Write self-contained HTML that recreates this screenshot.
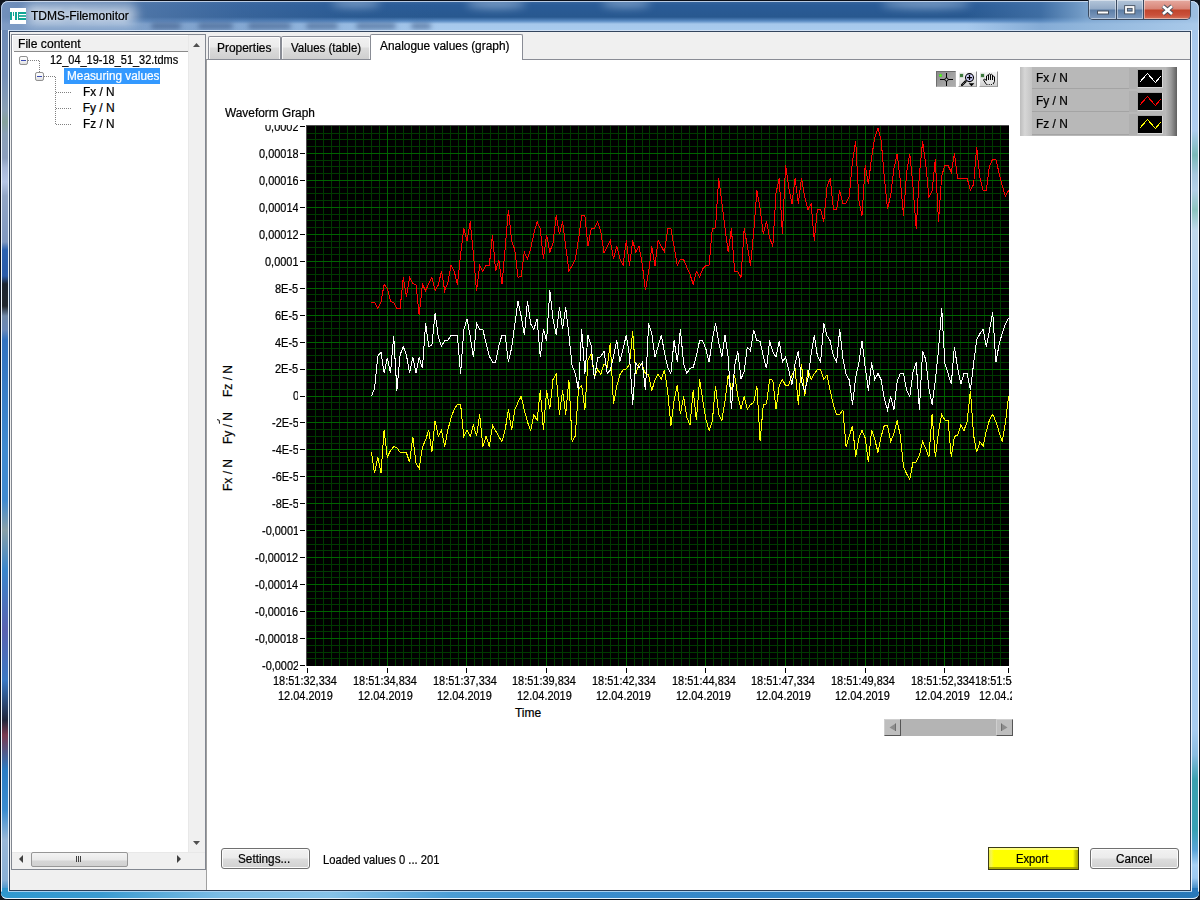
<!DOCTYPE html>
<html lang="en"><head><meta charset="utf-8"><title>TDMS-Filemonitor</title>
<style>
html,body{margin:0;padding:0}
body{width:1200px;height:900px;position:relative;overflow:hidden;background:#10141c;font-family:"Liberation Sans",sans-serif;font-size:12px;color:#000;line-height:14px;-webkit-text-stroke:0.22px #000}
div,span{position:absolute;box-sizing:border-box;white-space:nowrap}
svg{position:absolute;overflow:visible}
#frame{left:0;top:0;width:1200px;height:900px;border-radius:8px 8px 7px 7px;border:1px solid #0a0e18;
 background:#9cbfe4}
#ftop{left:1px;top:1px;width:1198px;height:29px;border-radius:7px 7px 0 0;box-shadow:inset 0 1px 0 rgba(225,235,248,.75),inset 1px 0 0 rgba(225,235,248,.6),inset -1px 0 0 rgba(225,235,248,.6);
 background:linear-gradient(to right,rgba(122,150,192,.9) 0,rgba(112,144,186,.8) 40px,rgba(100,134,180,.62) 140px,rgba(80,118,170,.4) 240px,rgba(60,105,160,.16) 340px,rgba(40,90,150,0) 440px,rgba(40,90,150,0) 965px,rgba(90,135,185,.45) 1040px,rgba(140,178,216,.8) 1086px,rgba(170,202,234,.9) 1198px),
 linear-gradient(to bottom,#3a679f 0,#2a5b97 4px,#28588f 16px,#5b8cc4 20px,#a6c8ec 23px,#a9cbee 29px)}
#tblobs{left:1px;top:1px;width:1198px;height:29px;overflow:hidden;border-radius:7px 7px 0 0}
#tblobs div{background:rgba(205,225,248,.55);border-radius:50%;filter:blur(4px)}
#tblobs div.sm{background:rgba(45,75,120,.55);border-radius:3px;filter:blur(2.5px)}
#tglow{left:24px;top:3px;width:114px;height:23px;border-radius:11px;background:rgba(235,242,250,.5);filter:blur(5px)}
#fleft{left:1px;top:30px;width:8px;height:861px;border-left:1px solid #eef6ff;border-right:1px solid #e8f2fc;
 background:linear-gradient(to bottom,#6d8bb6 0,#7590b8 45px,#8aa0b6 80px,#86a29c 92px,#8aa0b8 104px,#8c9fbe 128px,#a8b8d8 138px,#b6c6e6 152px,#92a6c6 166px,#8098c0 212px,#2c62b0 220px,#2a5aa8 246px,#1c2430 254px,#20262e 276px,#7088a8 286px,#6a88b8 300px,#3272c0 310px,#3f8ad0 420px,#3f8ad0 470px,#8aa0a8 500px,#3a86cc 540px,#5a62b0 600px,#3a78c4 650px,#20263c 690px,#7a3a50 705px,#2a7cc4 740px,#3a8cd0 780px,#9ab8d8 810px,#8ab0d6 850px,#3a90cc 861px)}
#fright{left:1191px;top:30px;width:8px;height:861px;border-left:1px solid #eaf4ff;border-right:1px solid #f2f8ff;
 background:linear-gradient(to bottom,#a8c8ec 0,#b0cef0 100px,#7ab8b8 125px,#a8c8e0 145px,#b4d0e8 160px,#8cc4c0 180px,#c0d8ec 200px,#b4d2f2 260px,#a8ccf0 700px,#8abce0 725px,#3aa0b0 750px,#38a0b4 800px,#5aa4d8 820px,#a8d0f4 835px,#9cc8f0 848px,#2c7cbc 861px)}
#fbot{left:1px;top:891px;width:1198px;height:8px;border-radius:0 0 6px 6px;border-top:1px solid #a8d0f0;border-bottom:1px solid #e6f2fc;
 background:linear-gradient(to right,#2f98cf 0,#3a9ad0 100px,#7cbce4 220px,#86c2e8 330px,#4a9cd4 450px,#3a8ccc 600px,#2e80c2 900px,#2878b8 1198px)}
#client{left:9px;top:31px;width:1182px;height:860px;border:1px solid #2b3e58;border-top-color:#33455e;background:#f0f0f0;box-shadow:0 -1px 0 rgba(220,232,248,.8)}
</style></head>
<body>
<div id="frame"></div><div id="ftop"></div><div id="fleft"></div><div id="fright"></div><div id="fbot"></div>
<div id="tblobs"><div style="left:330px;top:-1px;width:50px;height:7px"></div><div style="left:465px;top:-1px;width:60px;height:8px"></div><div style="left:600px;top:-1px;width:50px;height:7px"></div><div style="left:880px;top:-1px;width:90px;height:8px"></div><div class="sm" style="left:150px;top:22px;width:30px;height:6px"></div><div class="sm" style="left:197px;top:22px;width:35px;height:6px"></div><div class="sm" style="left:247px;top:22px;width:43px;height:6px"></div><div class="sm" style="left:305px;top:22px;width:32px;height:6px"></div><div class="sm" style="left:355px;top:22px;width:40px;height:6px"></div><div class="sm" style="left:410px;top:22px;width:20px;height:6px"></div></div>
<div style="left:1192px;top:888px;width:6px;height:5px;background:#2a79bb"></div><div style="left:2px;top:888px;width:6px;height:5px;background:#3096ce"></div>
<div id="client"></div><div id="tglow"></div>
<svg style="left:10px;top:8px" width="16" height="16" viewBox="0 0 16 16" shape-rendering="crispEdges">
<rect width="16" height="16" fill="#fff"/>
<g fill="#10a595"><rect x="0" y="4" width="2" height="8"/><rect x="3" y="4" width="1" height="4"/><rect x="5" y="4" width="2" height="8"/>
<rect x="8" y="4" width="1" height="8"/><rect x="8" y="4" width="8" height="1.6"/><rect x="8" y="10.3" width="8" height="1.7"/></g>
<rect x="9" y="7.3" width="7" height="1.3" fill="#38b4a6"/>
</svg>
<div style="left:31.30px;top:9.00px;transform:scaleX(1.0041);transform-origin:0 0;text-shadow:0 0 6px rgba(255,255,255,.9),0 0 10px rgba(255,255,255,.7)">TDMS-Filemonitor</div>
<div style="left:1088px;top:0;width:103px;height:20px;border:1px solid #3a4a60;border-top:none;border-radius:0 0 5px 5px;overflow:hidden;
    background:#6f8fb4">
    <div style="left:0;top:0;width:28px;height:19px;border-right:1px solid #3a4a60;background:linear-gradient(to bottom,#b4c6da 0,#93aac6 9px,#5d7ea6 10px,#7f9cc0 19px);box-shadow:inset 0 0 0 1px rgba(255,255,255,.45)"></div>
    <div style="left:28px;top:0;width:27px;height:19px;border-right:1px solid #3a4a60;background:linear-gradient(to bottom,#b4c6da 0,#93aac6 9px,#5d7ea6 10px,#7f9cc0 19px);box-shadow:inset 0 0 0 1px rgba(255,255,255,.45)"></div>
    <div style="left:55px;top:0;width:47px;height:19px;background:linear-gradient(to bottom,#e6aaa0 0,#d88476 9px,#c1452c 10px,#c9503a 15px,#d4745c 19px);box-shadow:inset 0 0 0 1px rgba(255,255,255,.45)"></div>
    </div>
<svg style="left:1088px;top:0" width="103" height="20" viewBox="0 0 103 20">
    <rect x="9.5" y="11" width="11" height="3" fill="#fff" stroke="#46505e" stroke-width="1"/>
    <rect x="38" y="7" width="7.5" height="5.5" fill="none" stroke="#46505e" stroke-width="3.6"/>
    <rect x="38" y="7" width="7.5" height="5.5" fill="none" stroke="#fff" stroke-width="1.8"/>
    <path d="M75 6.2 L84 14 M84 6.2 L75 14" stroke="#46505e" stroke-width="4.4" stroke-linecap="butt"/>
    <path d="M75 6.2 L84 14 M84 6.2 L75 14" stroke="#fff" stroke-width="2.5" stroke-linecap="butt"/>
    </svg>
<div id="tree" style="left:11px;top:34px;width:195px;height:836px;border:1px solid #828790;background:#fff"></div>
<div style="left:13px;top:36px;width:175px;height:15px;background:#f0f0f0"></div><div style="left:14px;top:51px;width:174px;height:1px;background:#8a8a8a"></div>
<div style="left:17.79px;top:36.80px;transform:scaleX(1.0082);transform-origin:0 0;">File content</div>
<div style="left:188px;top:35px;width:17px;height:817px;background:#f0f0f0;border-left:1px solid #e8e8e8"></div>
<svg style="left:188px;top:33px" width="17" height="819"><path d="M5 14 L8.5 10 L12 14 Z" fill="#505050"/><path d="M5 808 L12 808 L8.5 812 Z" fill="#505050"/></svg>
<div style="left:12px;top:852px;width:193px;height:17px;background:#f0f0f0;border-top:1px solid #e8e8e8"></div>
<div style="left:31px;top:852px;width:97px;height:15px;border:1px solid #979797;border-radius:2px;background:linear-gradient(to bottom,#f4f4f4 0,#e9e9e9 7px,#d6d6d6 8px,#cfcfcf 15px)"></div>
<svg style="left:12px;top:851px" width="193" height="17"><path d="M11 4 L7 8 L11 12 Z" fill="#404040"/><path d="M165 4 L169 8 L165 12 Z" fill="#404040"/><path d="M64.5 5 V11 M66.5 5 V11 M68.5 5 V11" stroke="#404040" stroke-width="1"/></svg>
<div style="left:64px;top:68px;width:96px;height:16px;background:#3399ff"></div>
<div style="left:49.99px;top:52.60px;transform:scaleX(0.9144);transform-origin:0 0;">12_04_19-18_51_32.tdms</div>
<div style="left:66.62px;top:68.50px;transform:scaleX(0.9828);transform-origin:0 0;color:#fff;-webkit-text-stroke-color:#fff;">Measuring values</div>
<div style="left:82.71px;top:84.50px;transform:scaleX(0.9867);transform-origin:0 0;">Fx / N</div>
<div style="left:82.70px;top:100.50px;">Fy / N</div>
<div style="left:82.71px;top:116.50px;transform:scaleX(0.9867);transform-origin:0 0;">Fz / N</div>
<svg style="left:12px;top:52px" width="120" height="80" shape-rendering="crispEdges">
    <g stroke="#808080" stroke-width="1" stroke-dasharray="1 1" fill="none">
    <path d="M16 8.5 H28"/><path d="M27.5 9 V20"/><path d="M32 24.5 H44"/><path d="M43.5 25 V72"/>
    <path d="M44 40.5 H59"/><path d="M44 56.5 H59"/><path d="M44 72.5 H59"/>
    </g>
    <defs><linearGradient id="bx" x1="0" y1="0" x2="0" y2="1"><stop offset="0" stop-color="#fff"/><stop offset=".5" stop-color="#f4f4f4"/><stop offset="1" stop-color="#dcdcdc"/></linearGradient></defs>
    <g fill="url(#bx)" stroke="#8e8e8e" stroke-width="1" shape-rendering="auto"><rect x="7.5" y="4.5" width="8" height="8" rx="1.6"/><rect x="23.5" y="20.5" width="8" height="8" rx="1.6"/></g>
    <path d="M9 8.5 H14 M25 24.5 H30" stroke="#3a4ab0" stroke-width="1"/>
    </svg>
<div id="pane" style="left:206px;top:59px;width:984px;height:831px;background:#fff;border-left:1px solid #a0a0a0;border-top:1px solid #898c95"></div>
<div style="left:208px;top:36px;width:73px;height:23px;border:1px solid #898c95;border-bottom:none;border-radius:2px 2px 0 0;background:linear-gradient(to bottom,#f2f2f2 0,#ebebeb 10px,#dddddd 11px,#cfcfcf 22px);box-shadow:inset 1px 1px 0 rgba(255,255,255,.75),inset -1px 0 0 rgba(255,255,255,.75)"></div>
<div style="left:281px;top:36px;width:90px;height:23px;border:1px solid #898c95;border-bottom:none;border-radius:2px 2px 0 0;background:linear-gradient(to bottom,#f2f2f2 0,#ebebeb 10px,#dddddd 11px,#cfcfcf 22px);box-shadow:inset 1px 1px 0 rgba(255,255,255,.75),inset -1px 0 0 rgba(255,255,255,.75)"></div>
<div style="left:370px;top:34px;width:153px;height:26px;border:1px solid #898c95;border-bottom:none;border-radius:2px 2px 0 0;background:#fff"></div>
<div style="left:217.31px;top:40.70px;transform:scaleX(0.9943);transform-origin:0 0;">Properties</div>
<div style="left:291.30px;top:40.70px;transform:scaleX(0.9589);transform-origin:0 0;">Values (table)</div>
<div style="left:380.30px;top:38.70px;transform:scaleX(0.9900);transform-origin:0 0;">Analogue values (graph)</div>
<div style="left:225.30px;top:105.70px;transform:scaleX(0.9889);transform-origin:0 0;">Waveform Graph</div>
<svg id="plot" style="left:0;top:0" width="1200" height="900" viewBox="0 0 1200 900">
<rect x="306" y="125" width="703" height="541" fill="#4d4d4d"/>
<rect x="307" y="126" width="702" height="540" fill="#000"/>
<defs><clipPath id="pc"><rect x="307" y="126" width="702" height="540"/></clipPath></defs>
<path d="M315.5 126V666M323.5 126V666M331.5 126V666M339.5 126V666M347.5 126V666M355.5 126V666M363.5 126V666M371.5 126V666M379.5 126V666M395.5 126V666M403.5 126V666M411.5 126V666M419.5 126V666M426.5 126V666M434.5 126V666M442.5 126V666M450.5 126V666M458.5 126V666M474.5 126V666M482.5 126V666M490.5 126V666M498.5 126V666M506.5 126V666M514.5 126V666M522.5 126V666M530.5 126V666M538.5 126V666M554.5 126V666M562.5 126V666M570.5 126V666M578.5 126V666M586.5 126V666M594.5 126V666M602.5 126V666M610.5 126V666M618.5 126V666M634.5 126V666M642.5 126V666M649.5 126V666M657.5 126V666M665.5 126V666M673.5 126V666M681.5 126V666M689.5 126V666M697.5 126V666M713.5 126V666M721.5 126V666M729.5 126V666M737.5 126V666M745.5 126V666M753.5 126V666M761.5 126V666M769.5 126V666M777.5 126V666M793.5 126V666M801.5 126V666M809.5 126V666M817.5 126V666M825.5 126V666M833.5 126V666M841.5 126V666M849.5 126V666M857.5 126V666M873.5 126V666M880.5 126V666M888.5 126V666M896.5 126V666M904.5 126V666M912.5 126V666M920.5 126V666M928.5 126V666M936.5 126V666M952.5 126V666M960.5 126V666M968.5 126V666M976.5 126V666M984.5 126V666M992.5 126V666M1000.5 126V666M307 133.5H1009M307 139.5H1009M307 146.5H1009M307 160.5H1009M307 166.5H1009M307 173.5H1009M307 187.5H1009M307 193.5H1009M307 200.5H1009M307 214.5H1009M307 220.5H1009M307 227.5H1009M307 241.5H1009M307 247.5H1009M307 254.5H1009M307 267.5H1009M307 274.5H1009M307 281.5H1009M307 294.5H1009M307 301.5H1009M307 308.5H1009M307 321.5H1009M307 328.5H1009M307 335.5H1009M307 348.5H1009M307 355.5H1009M307 362.5H1009M307 375.5H1009M307 382.5H1009M307 389.5H1009M307 402.5H1009M307 409.5H1009M307 416.5H1009M307 429.5H1009M307 436.5H1009M307 443.5H1009M307 456.5H1009M307 463.5H1009M307 470.5H1009M307 483.5H1009M307 490.5H1009M307 497.5H1009M307 510.5H1009M307 517.5H1009M307 524.5H1009M307 537.5H1009M307 544.5H1009M307 550.5H1009M307 564.5H1009M307 571.5H1009M307 577.5H1009M307 591.5H1009M307 598.5H1009M307 604.5H1009M307 618.5H1009M307 625.5H1009M307 631.5H1009M307 645.5H1009M307 652.5H1009M307 658.5H1009" stroke="#003a00" stroke-width="1" fill="none" shape-rendering="crispEdges"/>
<path d="M387.5 126V666M466.5 126V666M546.5 126V666M626.5 126V666M705.5 126V666M785.5 126V666M865.5 126V666M944.5 126V666M307 153.5H1009M307 180.5H1009M307 207.5H1009M307 234.5H1009M307 261.5H1009M307 288.5H1009M307 315.5H1009M307 342.5H1009M307 369.5H1009M307 396.5H1009M307 422.5H1009M307 449.5H1009M307 476.5H1009M307 503.5H1009M307 530.5H1009M307 557.5H1009M307 584.5H1009M307 611.5H1009M307 638.5H1009" stroke="#006400" stroke-width="1" fill="none" shape-rendering="crispEdges"/>
<path d="M300 126.5H305M300 153.5H305M300 180.5H305M300 207.5H305M300 234.5H305M300 261.5H305M300 288.5H305M300 315.5H305M300 342.5H305M300 369.5H305M300 396.5H305M300 422.5H305M300 449.5H305M300 476.5H305M300 503.5H305M300 530.5H305M300 557.5H305M300 584.5H305M300 611.5H305M300 638.5H305M300 665.5H305M307.5 668V673M387.5 668V673M466.5 668V673M546.5 668V673M626.5 668V673M705.5 668V673M785.5 668V673M865.5 668V673M944.5 668V673M1008.5 668V673" stroke="#000" stroke-width="1" fill="none" shape-rendering="crispEdges"/>
<polyline points="371.4,452.4 374.6,473.4 377.8,457.1 381.0,473.4 384.1,430.2 387.3,457.1 390.5,450.6 393.7,446.6 396.9,447.7 400.1,452.4 403.3,452.4 406.4,452.6 409.6,462.3 412.8,436.6 416.0,462.9 419.2,468.7 422.4,447.1 425.6,440.1 428.7,430.2 431.9,452.4 435.1,420.6 438.3,436.6 441.5,430.2 444.7,446.6 447.9,429.7 451.0,418.0 454.2,409.2 457.4,404.3 460.6,404.3 463.8,436.6 467.0,430.2 470.2,436.6 473.4,425.0 476.5,436.1 479.7,414.4 482.9,446.6 486.1,436.1 489.3,446.6 492.5,425.4 495.7,430.9 498.8,436.7 502.0,441.4 505.2,429.7 508.4,409.3 511.6,430.3 514.8,409.9 518.0,402.3 521.1,396.3 524.3,409.9 527.5,422.1 530.7,430.5 533.9,414.6 537.1,420.4 540.3,390.4 543.4,430.3 546.6,390.4 549.8,409.3 553.0,379.6 556.2,374.3 559.4,414.6 562.6,390.4 565.7,414.6 568.9,379.6 572.1,441.4 575.3,436.1 578.5,389.0 581.7,385.4 584.9,409.9 588.0,360.2 591.2,353.7 594.4,377.1 597.6,369.5 600.8,374.2 604.0,364.2 607.2,367.2 610.3,343.1 613.5,403.9 616.7,386.4 619.9,374.7 623.1,369.7 626.3,368.9 629.5,364.2 632.7,331.3 635.8,374.2 639.0,363.7 642.2,364.8 645.4,373.6 648.6,374.7 651.8,390.5 655.0,379.8 658.1,374.2 661.3,379.4 664.5,370.1 667.7,391.6 670.9,425.5 674.1,400.4 677.3,385.2 680.4,414.4 683.6,396.3 686.8,417.3 690.0,425.2 693.2,390.5 696.4,420.2 699.6,379.4 702.7,399.8 705.9,419.7 709.1,430.2 712.3,421.5 715.5,385.6 718.7,414.5 721.9,420.3 725.0,401.1 728.2,374.8 731.4,390.0 734.6,375.4 737.8,395.8 741.0,409.2 744.2,396.4 747.3,409.2 750.5,404.6 753.7,402.8 756.9,385.6 760.1,441.3 763.3,405.1 766.5,403.7 769.6,379.7 772.8,380.1 776.0,409.2 779.2,385.9 782.4,379.5 785.6,385.6 788.8,385.1 792.0,374.8 795.1,369.2 798.3,404.6 801.5,363.7 804.7,396.4 807.9,369.6 811.1,379.5 814.3,373.7 817.4,369.7 820.6,369.9 823.8,379.6 827.0,374.9 830.2,390.7 833.4,404.7 836.6,414.6 839.7,414.6 842.9,409.9 846.1,446.6 849.3,436.1 852.5,425.6 855.7,457.1 858.9,437.9 862.0,430.3 865.2,437.9 868.4,462.4 871.6,430.3 874.8,439.6 878.0,452.5 881.2,436.4 884.3,425.6 887.5,425.9 890.7,441.4 893.9,433.8 897.1,420.4 900.3,435.6 903.5,466.6 906.6,473.9 909.8,479.5 913.0,462.2 916.2,462.0 919.4,455.2 922.6,441.6 925.8,448.6 928.9,457.3 932.1,414.2 935.3,457.3 938.5,431.6 941.7,414.4 944.9,420.0 948.1,420.9 951.3,457.3 954.4,436.3 957.6,435.4 960.8,425.2 964.0,430.5 967.2,421.2 970.4,390.8 973.6,435.1 976.7,452.4 979.9,441.6 983.1,446.2 986.3,431.1 989.5,419.8 992.7,414.4 995.9,421.7 999.0,431.6 1002.2,441.6 1005.4,422.9 1008.6,396.1" fill="none" stroke="#ff0" stroke-width="1" shape-rendering="crispEdges" clip-path="url(#pc)"/>
<polyline points="371.4,302.2 374.6,302.2 377.8,308.3 381.0,301.9 384.1,284.4 387.3,288.5 390.5,301.3 393.7,302.5 396.9,308.3 400.1,308.3 403.3,277.4 406.4,296.6 409.6,277.4 412.8,283.8 416.0,284.6 419.2,315.3 422.4,284.4 425.6,290.8 428.7,283.8 431.9,277.4 435.1,290.8 438.3,285.0 441.5,271.0 444.7,290.8 447.9,282.6 451.0,265.1 454.2,271.0 457.4,285.0 460.6,254.7 463.8,228.4 467.0,240.7 470.2,221.4 473.4,253.5 476.5,290.6 479.7,265.6 482.9,271.4 486.1,265.3 489.3,265.3 492.5,234.7 495.7,271.4 498.8,259.7 502.0,284.2 505.2,247.5 508.4,209.6 511.6,240.5 514.8,249.8 518.0,277.2 521.1,276.6 524.3,252.1 527.5,259.1 530.7,248.6 533.9,233.5 537.1,221.6 540.3,228.8 543.4,259.1 546.6,234.7 549.8,252.1 553.0,242.8 556.2,215.4 559.4,234.1 562.6,221.6 565.7,246.3 568.9,270.8 572.1,265.6 575.3,259.7 578.5,239.3 581.7,215.8 584.9,215.8 588.0,246.3 591.2,228.8 594.4,228.2 597.6,221.6 600.8,231.7 604.0,252.7 607.2,246.9 610.3,240.5 613.5,259.1 616.7,246.3 619.9,258.6 623.1,265.0 626.3,240.5 629.5,265.6 632.7,240.5 635.8,252.1 639.0,246.3 642.2,263.8 645.4,290.0 648.6,272.0 651.8,246.3 655.0,265.6 658.1,240.5 661.3,246.3 664.5,252.1 667.7,228.6 670.9,228.6 674.1,246.9 677.3,265.6 680.4,259.4 683.6,259.4 686.8,267.3 690.0,274.3 693.2,284.2 696.4,271.4 699.6,277.2 702.7,268.9 705.9,265.6 709.1,265.0 712.3,228.3 715.5,228.0 718.7,178.2 721.9,202.7 725.0,228.3 728.2,252.2 731.4,228.3 734.6,271.2 737.8,271.5 741.0,277.4 744.2,228.3 747.3,245.8 750.5,265.6 753.7,231.8 756.9,190.4 760.1,208.5 763.3,234.1 766.5,221.3 769.6,237.6 772.8,246.4 776.0,193.3 779.2,178.2 782.4,234.1 785.6,165.3 788.8,187.5 792.0,203.8 795.1,178.2 798.3,203.8 801.5,178.2 804.7,196.8 807.9,209.7 811.1,203.6 814.3,240.5 817.4,209.2 820.6,209.2 823.8,221.5 827.0,187.1 830.2,178.3 833.4,209.2 836.6,209.2 839.7,190.3 842.9,203.4 846.1,203.0 849.3,196.4 852.5,160.8 855.7,141.3 858.9,200.5 862.0,215.6 865.2,165.5 868.4,184.1 871.6,157.3 874.8,137.5 878.0,128.2 881.2,141.0 884.3,177.1 887.5,209.2 890.7,195.2 893.9,169.0 897.1,153.6 900.3,180.6 903.5,215.6 906.6,172.5 909.8,153.6 913.0,186.5 916.2,228.8 919.4,174.8 922.6,141.3 925.8,164.7 928.9,196.7 932.1,190.9 935.3,159.4 938.5,221.8 941.7,175.7 944.9,165.6 948.1,165.8 951.3,172.2 954.4,153.3 957.6,178.4 960.8,178.4 964.0,178.4 967.2,178.4 970.4,190.3 973.6,184.5 976.7,147.2 979.9,177.5 983.1,190.3 986.3,190.3 989.5,165.8 992.7,159.2 995.9,159.4 999.0,172.8 1002.2,185.6 1005.4,196.4 1008.6,190.3" fill="none" stroke="#f00" stroke-width="1" shape-rendering="crispEdges" clip-path="url(#pc)"/>
<polyline points="371.4,396.2 374.6,388.4 377.8,356.1 381.0,352.1 384.1,373.0 387.3,357.9 390.5,373.0 393.7,335.7 396.9,390.7 400.1,355.0 403.3,346.6 406.4,355.0 409.6,373.0 412.8,357.3 416.0,373.0 419.2,357.3 422.4,368.4 425.6,323.5 428.7,346.2 431.9,345.6 435.1,312.8 438.3,336.9 441.5,346.2 444.7,340.7 447.9,340.4 451.0,335.4 454.2,335.4 457.4,335.4 460.6,373.6 463.8,329.9 467.0,318.8 470.2,336.3 473.4,357.3 476.5,323.5 479.7,329.1 482.9,329.9 486.1,343.3 489.3,356.1 492.5,362.2 495.7,362.0 498.8,345.6 502.0,335.4 505.2,335.7 508.4,362.0 511.6,348.0 514.8,324.7 518.0,301.3 521.1,315.9 524.3,335.1 527.5,301.3 530.7,324.1 533.9,329.3 537.1,318.6 540.3,357.3 543.4,329.3 546.6,340.7 549.8,290.2 553.0,319.4 556.2,335.1 559.4,307.2 562.6,329.3 565.7,307.2 568.9,335.1 572.1,365.5 575.3,373.6 578.5,390.3 581.7,329.3 584.9,373.6 588.0,335.4 591.2,345.5 594.4,379.3 597.6,357.7 600.8,356.6 604.0,351.3 607.2,373.5 610.3,370.0 613.5,357.1 616.7,340.2 619.9,361.8 623.1,348.4 626.3,335.3 629.5,356.0 632.7,404.7 635.8,363.0 639.0,367.6 642.2,362.4 645.4,390.4 648.6,323.3 651.8,333.8 655.0,357.1 658.1,346.6 661.3,335.3 664.5,352.5 667.7,367.6 670.9,373.5 674.1,340.2 677.3,362.4 680.4,329.2 683.6,363.6 686.8,373.5 690.0,368.2 693.2,367.6 696.4,355.4 699.6,340.9 702.7,340.9 705.9,349.1 709.1,361.9 712.3,339.7 715.5,323.4 718.7,342.1 721.9,357.2 725.0,335.4 728.2,357.8 731.4,409.1 734.6,366.0 737.8,351.4 741.0,378.8 744.2,371.8 747.3,347.1 750.5,350.8 753.7,329.8 756.9,340.6 760.1,341.3 763.3,356.6 766.5,368.3 769.6,340.6 772.8,352.0 776.0,357.2 779.2,340.6 782.4,361.9 785.6,357.2 788.8,370.1 792.0,384.6 795.1,363.1 798.3,351.4 801.5,381.1 804.7,391.0 807.9,378.8 811.1,354.3 814.3,335.1 817.4,356.1 820.6,362.5 823.8,323.4 827.0,335.7 830.2,340.9 833.4,356.1 836.6,362.5 839.7,329.2 842.9,358.4 846.1,374.7 849.3,380.0 852.5,404.5 855.7,377.6 858.9,362.5 862.0,340.6 865.2,367.1 868.4,390.5 871.6,362.5 874.8,379.4 878.0,373.6 881.2,380.0 884.3,398.6 887.5,409.7 890.7,396.3 893.9,409.7 897.1,381.7 900.3,373.6 903.5,373.6 906.6,390.5 909.8,396.3 913.0,372.4 916.2,362.5 919.4,409.7 922.6,351.4 925.8,359.5 928.9,388.6 932.1,404.6 935.3,380.5 938.5,350.1 941.7,307.6 944.9,363.6 948.1,373.5 951.3,384.2 954.4,346.6 957.6,368.2 960.8,384.2 964.0,373.5 967.2,373.7 970.4,390.4 973.6,363.6 976.7,339.7 979.9,333.8 983.1,329.4 986.3,346.6 989.5,330.3 992.7,312.2 995.9,362.4 999.0,344.9 1002.2,333.2 1005.4,323.9 1008.6,318.1" fill="none" stroke="#fff" stroke-width="1" shape-rendering="crispEdges" clip-path="url(#pc)"/>
</svg>
<div id="ylab" style="left:230px;top:125px;width:68px;height:560px;overflow:hidden">
<div style="left:35.17px;top:-5.10px;transform:scaleX(0.9120);transform-origin:0 0;">0,0002</div>
<div style="left:28.78px;top:21.85px;transform:scaleX(0.9120);transform-origin:0 0;">0,00018</div>
<div style="left:28.78px;top:48.80px;transform:scaleX(0.9120);transform-origin:0 0;">0,00016</div>
<div style="left:28.78px;top:75.75px;transform:scaleX(0.9120);transform-origin:0 0;">0,00014</div>
<div style="left:28.78px;top:102.70px;transform:scaleX(0.9120);transform-origin:0 0;">0,00012</div>
<div style="left:35.17px;top:129.65px;transform:scaleX(0.9120);transform-origin:0 0;">0,0001</div>
<div style="left:45.20px;top:156.60px;transform:scaleX(0.9120);transform-origin:0 0;">8E-5</div>
<div style="left:45.20px;top:183.55px;transform:scaleX(0.9120);transform-origin:0 0;">6E-5</div>
<div style="left:45.20px;top:210.50px;transform:scaleX(0.9120);transform-origin:0 0;">4E-5</div>
<div style="left:45.20px;top:237.45px;transform:scaleX(0.9120);transform-origin:0 0;">2E-5</div>
<div style="left:62.53px;top:264.40px;transform:scaleX(0.9120);transform-origin:0 0;">0</div>
<div style="left:41.55px;top:291.35px;transform:scaleX(0.9120);transform-origin:0 0;">-2E-5</div>
<div style="left:41.55px;top:318.30px;transform:scaleX(0.9120);transform-origin:0 0;">-4E-5</div>
<div style="left:41.55px;top:345.25px;transform:scaleX(0.9120);transform-origin:0 0;">-6E-5</div>
<div style="left:41.55px;top:372.20px;transform:scaleX(0.9120);transform-origin:0 0;">-8E-5</div>
<div style="left:31.52px;top:399.15px;transform:scaleX(0.9120);transform-origin:0 0;">-0,0001</div>
<div style="left:25.14px;top:426.10px;transform:scaleX(0.9120);transform-origin:0 0;">-0,00012</div>
<div style="left:25.14px;top:453.05px;transform:scaleX(0.9120);transform-origin:0 0;">-0,00014</div>
<div style="left:25.14px;top:480.00px;transform:scaleX(0.9120);transform-origin:0 0;">-0,00016</div>
<div style="left:25.14px;top:506.95px;transform:scaleX(0.9120);transform-origin:0 0;">-0,00018</div>
<div style="left:31.52px;top:533.90px;transform:scaleX(0.9120);transform-origin:0 0;">-0,0002</div>
</div>
<div id="xlab" style="left:250px;top:672px;width:761.6px;height:34px;overflow:hidden">
<div style="left:23.32px;top:2.00px;transform:scaleX(0.9120);transform-origin:0 0;">18:51:32,334</div>
<div style="left:27.88px;top:16.80px;transform:scaleX(0.9120);transform-origin:0 0;">12.04.2019</div>
<div style="left:102.97px;top:2.00px;transform:scaleX(0.9120);transform-origin:0 0;">18:51:34,834</div>
<div style="left:107.53px;top:16.80px;transform:scaleX(0.9120);transform-origin:0 0;">12.04.2019</div>
<div style="left:182.62px;top:2.00px;transform:scaleX(0.9120);transform-origin:0 0;">18:51:37,334</div>
<div style="left:187.18px;top:16.80px;transform:scaleX(0.9120);transform-origin:0 0;">12.04.2019</div>
<div style="left:262.27px;top:2.00px;transform:scaleX(0.9120);transform-origin:0 0;">18:51:39,834</div>
<div style="left:266.83px;top:16.80px;transform:scaleX(0.9120);transform-origin:0 0;">12.04.2019</div>
<div style="left:341.92px;top:2.00px;transform:scaleX(0.9120);transform-origin:0 0;">18:51:42,334</div>
<div style="left:346.48px;top:16.80px;transform:scaleX(0.9120);transform-origin:0 0;">12.04.2019</div>
<div style="left:421.57px;top:2.00px;transform:scaleX(0.9120);transform-origin:0 0;">18:51:44,834</div>
<div style="left:426.13px;top:16.80px;transform:scaleX(0.9120);transform-origin:0 0;">12.04.2019</div>
<div style="left:501.22px;top:2.00px;transform:scaleX(0.9120);transform-origin:0 0;">18:51:47,334</div>
<div style="left:505.78px;top:16.80px;transform:scaleX(0.9120);transform-origin:0 0;">12.04.2019</div>
<div style="left:580.87px;top:2.00px;transform:scaleX(0.9120);transform-origin:0 0;">18:51:49,834</div>
<div style="left:585.43px;top:16.80px;transform:scaleX(0.9120);transform-origin:0 0;">12.04.2019</div>
<div style="left:660.52px;top:2.00px;transform:scaleX(0.9120);transform-origin:0 0;">18:51:52,334</div>
<div style="left:665.08px;top:16.80px;transform:scaleX(0.9120);transform-origin:0 0;">12.04.2019</div>
<div style="left:725.12px;top:2.00px;transform:scaleX(0.9120);transform-origin:0 0;">18:51:54,334</div>
<div style="left:728.88px;top:16.80px;transform:scaleX(0.9120);transform-origin:0 0;">12.04.2019</div>
</div>
<div style="left:514.90px;top:705.80px;">Time</div>
<div style="left:228px;top:381px;width:0;height:0"><div style="left:-30px;top:-7px;width:60px;text-align:center;transform:rotate(-90deg)">Fz / N</div></div>
<div style="left:228px;top:428px;width:0;height:0"><div style="left:-30px;top:-7px;width:60px;text-align:center;transform:rotate(-90deg)">Fy / N</div></div>
<div style="left:228px;top:474.5px;width:0;height:0"><div style="left:-30px;top:-7px;width:60px;text-align:center;transform:rotate(-90deg)">Fx / N</div></div>
<svg style="left:214px;top:416px" width="8" height="10"><path d="M3 3.6 L5.2 4.2 L5.5 7.6" stroke="#111" stroke-width="1" fill="none"/></svg>
<div style="left:884px;top:719px;width:129px;height:17px;background:#b4b4b4"></div>
<div style="left:884px;top:719px;width:17px;height:17px;background:#bebebe;border:1px solid;border-color:#cfcfcf #565656 #565656 #cfcfcf"></div>
<div style="left:996px;top:719px;width:17px;height:17px;background:#bebebe;border:1px solid;border-color:#cfcfcf #565656 #565656 #cfcfcf"></div>
<svg style="left:884px;top:719px" width="129" height="17"><path d="M11.5 4.5 L5.5 8.5 L11.5 12 Z" fill="#8c8c8c"/><path d="M11.5 4.5 V12" stroke="#6e6e6e" stroke-width="1"/><path d="M117.5 4.5 L123.5 8.5 L117.5 12 Z" fill="#8c8c8c"/><path d="M117.5 4.5 V12" stroke="#6e6e6e" stroke-width="1"/></svg>
<div style="left:936px;top:71px;width:20px;height:16px;background:linear-gradient(135deg,#8a8a8a,#a4a4a4 60%,#ababab);border:1px solid;border-color:#6e6e6e #b4b4b4 #b4b4b4 #6e6e6e"></div>
<div style="left:958px;top:71px;width:19px;height:16px;background:linear-gradient(to bottom,#f6f6f6,#e4e4e4 60%,#cfcfcf);border:1px solid;border-color:#fff #8c8c8c #a0a0a0 #fff"></div>
<div style="left:979px;top:71px;width:19px;height:16px;background:linear-gradient(to bottom,#f6f6f6,#e4e4e4 60%,#cfcfcf);border:1px solid;border-color:#fff #8c8c8c #a0a0a0 #fff"></div>
<svg style="left:936px;top:71px" width="64" height="16" viewBox="0 0 64 16">
<g shape-rendering="crispEdges"><path d="M4 8.5 H17 M10.5 2 V15" stroke="#000" stroke-width="1"/>
<rect x="3" y="3" width="3" height="3" fill="#30d818" opacity=".55"/><path d="M3 4.5 H6 M4.5 3 V6" stroke="#58f020" stroke-width="1"/></g>
<circle cx="10.5" cy="8.5" r="1.6" fill="#bdbdbd" stroke="#000" stroke-width="1"/>
<rect x="24" y="3" width="3" height="3" fill="#3c783c"/><rect x="23.5" y="2.5" width="4" height="4" fill="#3c783c" opacity=".3"/>
<path d="M29.6 10.4 L26 14" stroke="#000" stroke-width="2.2" stroke-linecap="round"/>
<path d="M29.3 10.7 L26.1 13.9" stroke="#9a9a9a" stroke-width="1" stroke-dasharray="1 1"/>
<circle cx="33.5" cy="6.6" r="4" fill="#d6d6ff" stroke="#000" stroke-width="1.1"/>
<path d="M31 6.6 H36 M33.5 4.1 V9.1" stroke="#000" stroke-width="1.3"/>
<path d="M32.6 12.3 H38.4 L35.5 15.2 Z" fill="#000"/>
<rect x="45" y="3" width="3" height="3" fill="#3c783c"/><rect x="44.5" y="2.5" width="4" height="4" fill="#3c783c" opacity=".3"/>
<path d="M50.5 13.5 L47.5 9 L48.5 8 L50.5 9.5 V5 Q51.5 3.6 52.5 5 V3.6 Q53.5 2.2 54.5 3.6 V3.8 Q55.5 2.6 56.5 4 V5.2 Q57.6 4.4 58.5 6 V10.5 L56.8 13.5 Z" fill="#e6e6e6" stroke="#000" stroke-width="1" stroke-linejoin="round"/>
<path d="M52.5 5 V9 M54.5 3.8 V9 M56.5 4.4 V9" stroke="#000" stroke-width="1"/>
<path d="M50.5 13.5 H57" stroke="#e6e6e6" stroke-width="1.2"/><path d="M50.5 13.5 H57" stroke="#000" stroke-width="1" stroke-dasharray="1 1.2"/>
</svg>
<div style="left:1020px;top:67px;width:157px;height:69px;background:#b8b8b8"></div>
<div style="left:1020px;top:67px;width:12px;height:69px;background:linear-gradient(to right,#bdbdbd,#d6d6d6 40%,#c4c4c4)"></div>
<div style="left:1165px;top:67px;width:12px;height:69px;background:linear-gradient(to right,#bcbcbc,#9a9a9a 50%,#606060)"></div>
<div style="left:1032px;top:88px;width:97px;height:1px;background:#a4a4a4"></div>
<div style="left:1129px;top:68px;width:8px;height:21px;background:#b0b0b0"></div>
<div style="left:1035.71px;top:70.60px;transform:scaleX(0.9933);transform-origin:0 0;">Fx / N</div>
<div style="left:1137px;top:69px;width:26px;height:19px;background:#000;border:1px solid;border-color:#a8a8a8 #d8d8d8 #d8d8d8 #a8a8a8"></div>
<svg style="left:1137px;top:69px" width="26" height="19"><path d="M2.5 13.5 L10.5 4.5 L18.5 13.5 L23.5 7.5" stroke="#fff" stroke-width="1" fill="none" shape-rendering="crispEdges"/></svg>
<div style="left:1032px;top:111px;width:97px;height:1px;background:#a4a4a4"></div>
<div style="left:1129px;top:91px;width:8px;height:21px;background:#b0b0b0"></div>
<div style="left:1035.71px;top:93.60px;transform:scaleX(0.9933);transform-origin:0 0;">Fy / N</div>
<div style="left:1137px;top:92px;width:26px;height:19px;background:#000;border:1px solid;border-color:#a8a8a8 #d8d8d8 #d8d8d8 #a8a8a8"></div>
<svg style="left:1137px;top:92px" width="26" height="19"><path d="M2.5 13.5 L10.5 4.5 L18.5 13.5 L23.5 7.5" stroke="#f00" stroke-width="1" fill="none" shape-rendering="crispEdges"/></svg>
<div style="left:1032px;top:134px;width:97px;height:1px;background:#a4a4a4"></div>
<div style="left:1129px;top:114px;width:8px;height:21px;background:#b0b0b0"></div>
<div style="left:1035.71px;top:116.60px;transform:scaleX(0.9933);transform-origin:0 0;">Fz / N</div>
<div style="left:1137px;top:115px;width:26px;height:19px;background:#000;border:1px solid;border-color:#a8a8a8 #d8d8d8 #d8d8d8 #a8a8a8"></div>
<svg style="left:1137px;top:115px" width="26" height="19"><path d="M2.5 13.5 L10.5 4.5 L18.5 13.5 L23.5 7.5" stroke="#ff0" stroke-width="1" fill="none" shape-rendering="crispEdges"/></svg>
<div style="left:221px;top:848px;width:89px;height:21px;border:1px solid #707070;border-radius:3px;background:linear-gradient(to bottom,#f2f2f2 0,#ebebeb 9px,#dddddd 10px,#cfcfcf 20px);box-shadow:inset 0 0 0 1px #fcfcfc"></div>
<div style="left:238.42px;top:852.20px;transform:scaleX(0.9804);transform-origin:0 0;">Settings...</div>
<div style="left:322.67px;top:853.20px;transform:scaleX(0.9333);transform-origin:0 0;">Loaded values 0 ... 201</div>
<div style="left:988px;top:847px;width:91px;height:23px;border:1px solid #3a3a18;background:linear-gradient(to right,#e6e640 0,#f6f650 2px,#ffff00 5px,#ffff00 84px,#d4d400 86px,#a8a800 89px);box-shadow:inset 0 -2px 0 rgba(150,150,0,.8),inset 0 2px 0 rgba(255,255,150,.8)"></div>
<div style="left:1015.76px;top:851.80px;transform:scaleX(0.9353);transform-origin:0 0;">Export</div>
<div style="left:1090px;top:848px;width:89px;height:21px;border:1px solid #707070;border-radius:3px;background:linear-gradient(to bottom,#f2f2f2 0,#ebebeb 9px,#dddddd 10px,#cfcfcf 20px);box-shadow:inset 0 0 0 1px #fcfcfc"></div>
<div style="left:1115.73px;top:851.80px;transform:scaleX(0.9722);transform-origin:0 0;">Cancel</div>
</body></html>
